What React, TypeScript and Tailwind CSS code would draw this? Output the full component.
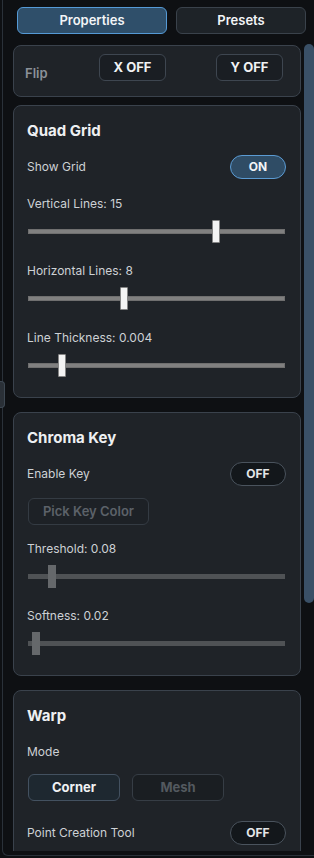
import type { ReactNode } from "react";

type SliderProps = {
  pos: number;
  disabled?: boolean;
};

function Slider({ pos, disabled }: SliderProps) {
  return (
    <div className="relative ml-[1px] mr-[1px] mt-[8px] h-[23px]">
      <div
        className={
          disabled
            ? "absolute left-0 right-0 top-[9px] h-[5px] bg-[#4f5255]"
            : "absolute left-0 right-0 top-[9px] h-[5px] border border-[#6f6f6f] bg-[#808080]"
        }
      />
      <div
        className={
          disabled
            ? "absolute top-0 h-[23px] w-[8px] bg-[#65686b]"
            : "absolute top-0 h-[23px] w-[8px] rounded-[1px] border border-[#858585] bg-[#f3f3f3]"
        }
        style={{ left: pos }}
      />
    </div>
  );
}

function Toggle({ on }: { on?: boolean }) {
  return (
    <button
      className={
        on
          ? "h-[24px] w-[56px] rounded-full border border-[#5b9bd3] bg-[#2f4c65] text-[12px] font-bold text-[#f2f4f6]"
          : "h-[24px] w-[56px] rounded-full border border-[#4a535d] bg-[#13171b] text-[12px] font-bold text-[#e4e6e8]"
      }
    >
      {on ? "ON" : "OFF"}
    </button>
  );
}

function Row({ label, children }: { label: string; children: ReactNode }) {
  return (
    <div className="mt-[14px] flex h-[24px] items-center justify-between">
      <span className="text-[12px] leading-[16px] text-[#cdd1d5]">{label}</span>
      {children}
    </div>
  );
}

// gap above a slider label, in px
function Label({ text, top = 20 }: { text: string; top?: number }) {
  return (
    <div
      className={
        top === 20
          ? "mt-[20px] text-[12px] leading-[16px] text-[#cdd1d5]"
          : top === 16
            ? "mt-[16px] text-[12px] leading-[16px] text-[#cdd1d5]"
            : "mt-[17px] text-[12px] leading-[16px] text-[#cdd1d5]"
      }
    >
      {text}
    </div>
  );
}

function Section({ title, children, first }: { title: string; children: ReactNode; first?: boolean }) {
  return (
    <div
      className={
        first
          ? "mt-[8px] rounded-[8px] border border-[#3a424c] bg-[#1f2328] pl-[13px] pr-[14px] pt-[15px] pb-[20px]"
          : "mt-[14px] rounded-[8px] border border-[#3a424c] bg-[#1f2328] pl-[13px] pr-[14px] pt-[15px] pb-[20px]"
      }
    >
      <h3 className="text-[15px] font-bold leading-[20px] text-[#eef0f2]">{title}</h3>
      {children}
    </div>
  );
}

export default function App() {
  return (
    <div className="relative h-[858px] w-[314px] overflow-hidden bg-[#0e1013] font-['Inter',sans-serif]">
      <div className="absolute left-0 top-[381px] h-[27px] w-[5px] rounded-r-[4px] border border-l-0 border-[#3e4852] bg-[#2a3037]" />
      <div className="ml-[2px] flex h-[856px] flex-col rounded-bl-[6px] border-b border-l border-[#2a3139]">
        <div className="flex gap-[9px] pl-[14px] pt-[7px]">
          <button className="h-[27px] w-[150px] rounded-[6px] border border-[#559ad6] bg-[#2f4f6a] text-[13px] font-semibold text-[#f3f5f7]">
            Properties
          </button>
          <button className="h-[27px] w-[130px] rounded-[6px] border border-[#3a424b] bg-[#1e2328] text-[13px] font-semibold text-[#f3f5f7]">
            Presets
          </button>
        </div>

        <div className="mt-[10px] flex h-[807px] gap-[3px]">
          <div className="w-[298px] overflow-hidden pl-[10px] pt-[1px]">
            <div className="flex h-[52px] items-start rounded-[8px] border border-[#3a424c] bg-[#1f2328] px-[11px] pt-[8px]">
              <span className="mt-[11px] w-[74px] shrink-0 text-[13px] font-semibold leading-[16px] text-[#8b9198]">
                Flip
              </span>
              <button className="h-[27px] w-[67px] rounded-[6px] border border-[#3e4650] bg-[#1a1e23] text-[13px] font-bold text-[#f0f2f4]">
                X OFF
              </button>
              <button className="ml-[50px] h-[27px] w-[67px] rounded-[6px] border border-[#3e4650] bg-[#1a1e23] text-[13px] font-bold text-[#f0f2f4]">
                Y OFF
              </button>
            </div>

            <Section title="Quad Grid" first>
              <Row label="Show Grid">
                <Toggle on />
              </Row>
              <Label text="Vertical Lines: 15" top={17} />
              <Slider pos={184} />
              <Label text="Horizontal Lines: 8" />
              <Slider pos={92} />
              <Label text="Line Thickness: 0.004" />
              <Slider pos={30} />
            </Section>

            <Section title="Chroma Key">
              <Row label="Enable Key">
                <Toggle />
              </Row>
              <button className="ml-[1px] mt-[12px] h-[27px] w-[121px] rounded-[6px] border border-[#343b43] bg-[#1d2126] text-[13px] font-semibold text-[#5c6269]">
                Pick Key Color
              </button>
              <Label text="Threshold: 0.08" top={16} />
              <Slider pos={20} disabled />
              <Label text="Softness: 0.02" />
              <Slider pos={4} disabled />
            </Section>

            <Section title="Warp">
              <div className="mt-[18px] text-[12px] leading-[16px] text-[#cdd1d5]">Mode</div>
              <div className="ml-[1px] mt-[14px] flex gap-[12px]">
                <button className="h-[27px] w-[92px] rounded-[6px] border border-[#435160] bg-[#1e2830] text-[13px] font-bold text-[#f0f2f4]">
                  Corner
                </button>
                <button className="h-[27px] w-[92px] rounded-[6px] border border-[#363d45] bg-[#1a1e22] text-[13px] font-bold text-[#53595f]">
                  Mesh
                </button>
              </div>
              <div className="mt-[20px] flex h-[24px] items-center justify-between">
                <span className="text-[12px] leading-[16px] text-[#cdd1d5]">Point Creation Tool</span>
                <Toggle />
              </div>
              <div className="h-[40px]" />
            </Section>
          </div>
          <div className="w-[10px]">
            <div className="h-[559px] w-[10px] rounded-[5px] bg-[#3a5067]" />
          </div>
        </div>
      </div>
    </div>
  );
}
